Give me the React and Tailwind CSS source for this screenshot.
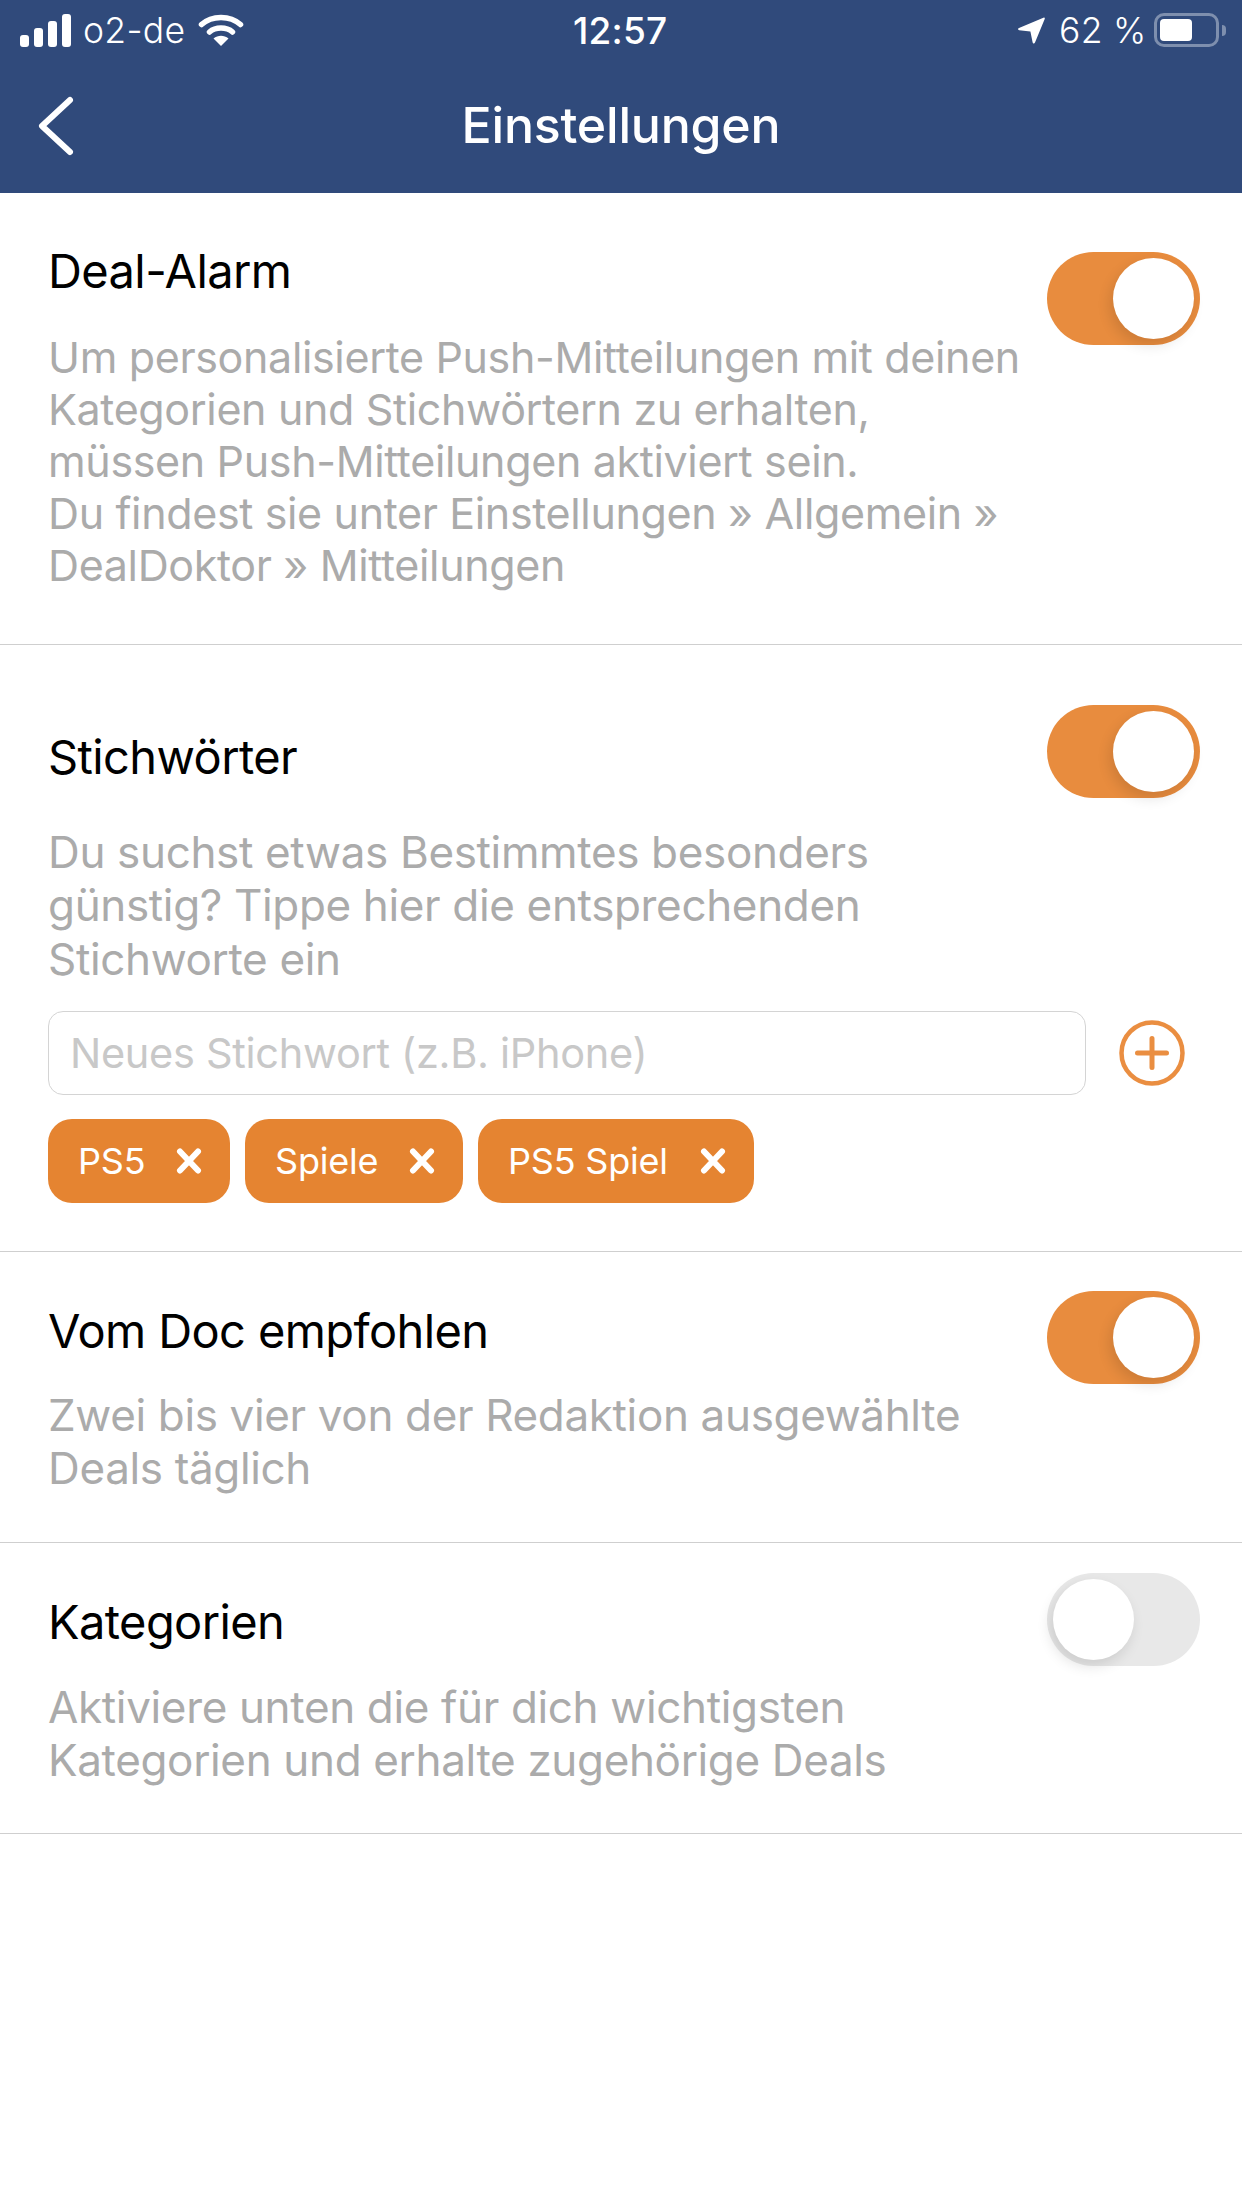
import React from "react";

const sans = "font-['Inter','Liberation_Sans',sans-serif]";

function Toggle({ on }) {
  return (
    <div
      className={`w-[153px] h-[93px] rounded-full flex items-center px-[6px] shrink-0 ${
        on ? "bg-[#e88c3e] justify-end" : "bg-[#e8e8e8] justify-start"
      }`}
    >
      <div className="w-[81px] h-[81px] rounded-full bg-white shadow-[-3px_6px_14px_rgba(0,0,0,0.12)]" />
    </div>
  );
}

function Section({ title, lines, on, className, titleClass, toggleClass, descClass, children }) {
  return (
    <section className={`border-b-[1.5px] border-[#cfcfcf] ${className}`}>
      <div className="flex justify-between items-start pl-[48px] pr-[42px]">
        <div className="min-w-0">
          <h2 className={`text-[47px] leading-[56px] font-normal text-black tracking-[-0.6px] ${titleClass}`}>{title}</h2>
          <p className={`text-[#ababab] tracking-[-0.35px] whitespace-nowrap ${descClass}`}>
            {lines.map((l) => (
              <span key={l} className="block">{l}</span>
            ))}
          </p>
        </div>
        <div className={toggleClass}>
          <Toggle on={on} />
        </div>
      </div>
      {children}
    </section>
  );
}

function Tag({ label, className }) {
  return (
    <div className={`h-[84px] rounded-[24px] bg-[#e58431] text-white text-[36px] tracking-[-0.2px] flex items-center justify-between pl-[30px] pr-[28px] ${className}`}>
      <span>{label}</span>
      <svg width="26" height="26" viewBox="0 0 26 26" className="shrink-0">
        <path d="M4 3.5 L22 22.5 M22 3.5 L4 22.5" stroke="#fff" strokeWidth="6" strokeLinecap="round" fill="none" />
      </svg>
    </div>
  );
}

function StatusBar() {
  return (
    <div className="relative h-[60px] text-white">
      {/* signal strength */}
      <svg className="absolute left-[20px] top-[14px]" width="52" height="33" viewBox="0 0 52 33">
        <rect x="0" y="21" width="9" height="12" rx="3" fill="#fff" />
        <rect x="14" y="14" width="9" height="19" rx="3" fill="#fff" />
        <rect x="28" y="7" width="9" height="26" rx="3" fill="#fff" />
        <rect x="42" y="0" width="9" height="33" rx="3" fill="#fff" />
      </svg>
      <span className="absolute left-[83px] top-[10px] text-[35.5px] leading-[42px] font-light tracking-[0.3px]">o2-de</span>
      {/* wifi */}
      <svg className="absolute left-[198px] top-[13px]" width="46" height="33" viewBox="0 0 46 33">
        <path d="M3.5 11.5 C14 2 32 2 42.5 11.5" stroke="#fff" strokeWidth="5.5" strokeLinecap="round" fill="none" />
        <path d="M11.5 19 C17.5 13.8 28.5 13.8 34.5 19" stroke="#fff" strokeWidth="5.5" strokeLinecap="round" fill="none" />
        <path d="M23 33 L15.5 25.5 C20 21.8 26 21.8 30.5 25.5 Z" fill="#fff" />
      </svg>
      <span className="absolute left-[573px] top-[10px] text-[37px] leading-[42px] font-medium tracking-[0.2px]">12:57</span>
      {/* location arrow */}
      <svg className="absolute left-[1018px] top-[17px]" width="27" height="27" viewBox="0 0 27 27">
        <path d="M26 0.5 C26.8 0.5 27 1.2 26.7 2 L17 25.5 C16.4 27 14.9 26.8 14.6 25.3 L12.4 14.6 L1.2 13.2 C-0.2 13 -0.4 11.5 1 10.9 Z" fill="#fff" />
      </svg>
      <span className="absolute left-[1059px] top-[10px] text-[35.5px] leading-[42px] font-light tracking-[0.3px]">62 %</span>
      {/* battery */}
      <div className="absolute left-[1154px] top-[13px] w-[65px] h-[34px] rounded-[10px] border-[3px] border-[#7e8fae] p-[3px]">
        <div className="w-[32px] h-[22px] rounded-[4px] bg-white" />
      </div>
      <div className="absolute left-[1222px] top-[25px] w-[4px] h-[11px] rounded-r-full bg-[#7e8fae]" />
    </div>
  );
}

export default function App() {
  return (
    <div className={`w-[1242px] h-[2208px] bg-white overflow-hidden ${sans}`}>
      <header className="h-[193px] bg-[#304a7b]">
        <StatusBar />
        <div className="relative h-[133px] flex items-center justify-center">
          <svg className="absolute left-[36px] top-[35px]" width="40" height="62" viewBox="0 0 40 62">
            <path d="M34 5 L6 31 L34 57" stroke="#fff" strokeWidth="6" strokeLinecap="round" strokeLinejoin="round" fill="none" />
          </svg>
          <h1 className="text-[50px] leading-[56px] font-medium text-white tracking-[-0.2px] -mt-[4px]">Einstellungen</h1>
        </div>
      </header>

      <Section
        title="Deal-Alarm"
        on
        className="h-[452px]"
        titleClass="mt-[50px]"
        descClass="mt-[32px] text-[43px] leading-[52px]"
        toggleClass="mt-[59px]"
        lines={[
          "Um personalisierte Push-Mitteilungen mit deinen",
          "Kategorien und Stichwörtern zu erhalten,",
          "müssen Push-Mitteilungen aktiviert sein.",
          "Du findest sie unter Einstellungen » Allgemein »",
          "DealDoktor » Mitteilungen",
        ]}
      />

      <Section
        title="Stichwörter"
        on
        className="h-[607px]"
        titleClass="mt-[84px]"
        descClass="mt-[41px] text-[44px] leading-[53.3px]"
        toggleClass="mt-[60px]"
        lines={[
          "Du suchst etwas Bestimmtes besonders",
          "günstig? Tippe hier die entsprechenden",
          "Stichworte ein",
        ]}
      >
        <div className="flex items-center pl-[48px] mt-[25px]">
          <div className="w-[1038px] h-[84px] rounded-[15px] border-[1.5px] border-[#d4d4d4] flex items-center pl-[21px] text-[41.5px] text-[#c8c8c8] tracking-[-0.3px]">
            Neues Stichwort (z.B. iPhone)
          </div>
          <svg className="ml-[33px]" width="66" height="66" viewBox="0 0 66 66">
            <circle cx="33" cy="33" r="30.5" stroke="#ea8e41" strokeWidth="4.5" fill="none" />
            <path d="M33 18.5 V47.5 M18.5 33 H47.5" stroke="#ea8e41" strokeWidth="5" strokeLinecap="round" />
          </svg>
        </div>
        <div className="flex gap-[15px] pl-[48px] mt-[24px]">
          <Tag label="PS5" className="w-[182px]" />
          <Tag label="Spiele" className="w-[218px]" />
          <Tag label="PS5 Spiel" className="w-[276px]" />
        </div>
      </Section>

      <Section
        title="Vom Doc empfohlen"
        on
        className="h-[291px]"
        titleClass="mt-[51px]"
        descClass="mt-[30px] text-[44px] leading-[52.5px]"
        toggleClass="mt-[39px]"
        lines={["Zwei bis vier von der Redaktion ausgewählte", "Deals täglich"]}
      />

      <Section
        title="Kategorien"
        on={false}
        className="h-[291px]"
        titleClass="mt-[51px]"
        descClass="mt-[31px] text-[44px] leading-[52.5px]"
        toggleClass="mt-[30px]"
        lines={["Aktiviere unten die für dich wichtigsten", "Kategorien und erhalte zugehörige Deals"]}
      />
    </div>
  );
}
